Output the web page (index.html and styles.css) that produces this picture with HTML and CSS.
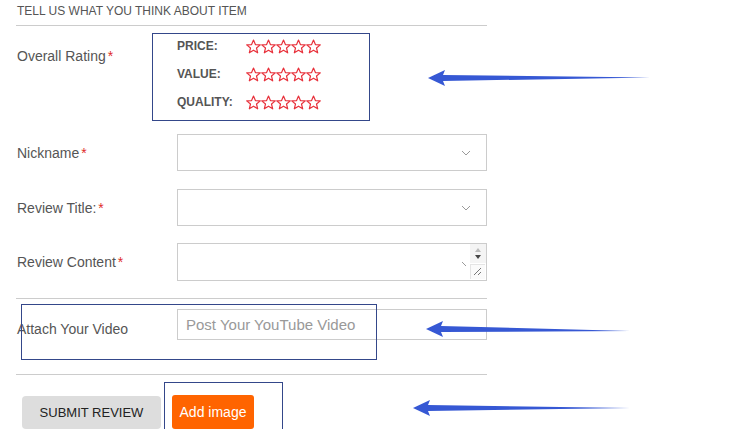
FILE: index.html
```html
<!DOCTYPE html>
<html lang="en">
<head>
    <meta charset="UTF-8">
    <title>Write a review</title>
    <link rel="stylesheet" href="styles.css">
</head>
<body>

<svg width="0" height="0" class="defs">
    <symbol id="star" viewBox="0 0 16 15">
        <path d="M8 1 L9.9 5.6 L14.8 5.9 L11 9 L12.2 13.8 L8 11.2 L3.8 13.8 L5 9 L1.2 5.9 L6.1 5.6 Z" fill="none" stroke="#e8323c" stroke-width="1.2" stroke-linejoin="round"/>
    </symbol>
    <symbol id="stars" viewBox="0 0 75 15">
        <use href="#star" x="0" width="16" height="15"/>
        <use href="#star" x="15" width="16" height="15"/>
        <use href="#star" x="30" width="16" height="15"/>
        <use href="#star" x="45" width="16" height="15"/>
        <use href="#star" x="60" width="16" height="15"/>
    </symbol>
</svg>

<div class="review">
    <h3 class="review-title">Tell us what you think about item</h3>

    <div class="row row-rating">
        <label class="field-label">Overall Rating<em>*</em></label>
        <div class="rating-box">
            <div class="rating-line"><span>PRICE:</span><svg class="stars"><use href="#stars"/></svg></div>
            <div class="rating-line"><span>VALUE:</span><svg class="stars"><use href="#stars"/></svg></div>
            <div class="rating-line"><span>QUALITY:</span><svg class="stars"><use href="#stars"/></svg></div>
        </div>
    </div>

    <div class="row row-nick">
        <label class="field-label">Nickname<em>*</em></label>
        <div class="field select">
            <svg class="chevron" width="10" height="6"><path d="M1 1 L5 5 L9 1" fill="none" stroke="#9a9a9a" stroke-width="1"/></svg>
        </div>
    </div>

    <div class="row row-title">
        <label class="field-label">Review Title:<em>*</em></label>
        <div class="field select">
            <svg class="chevron" width="10" height="6"><path d="M1 1 L5 5 L9 1" fill="none" stroke="#9a9a9a" stroke-width="1"/></svg>
        </div>
    </div>

    <div class="row row-content">
        <label class="field-label">Review Content<em>*</em></label>
        <div class="field textarea">
            <svg class="chevron hidden-chevron" width="8" height="6"><path d="M1 1 L5 5" fill="none" stroke="#9a9a9a" stroke-width="1"/></svg>
            <div class="spinner">
                <svg width="16" height="19"><path d="M5 8 L8 4 L11 8 Z" fill="#bbb"/><path d="M5 11 L8 15 L11 11 Z" fill="#444"/></svg>
            </div>
            <svg class="grip" width="11" height="11"><path d="M10 3 L3 10 M10 7 L7 10" stroke="#777" stroke-width="1"/></svg>
        </div>
    </div>

    <hr class="divider divider-top">

    <div class="row row-video">
        <label class="field-label">Attach Your Video</label>
        <input class="field video-input" type="text" placeholder="Post Your YouTube Video">
        <div class="mark mark-video"></div>
    </div>

    <hr class="divider divider-bottom">

    <div class="actions">
        <button class="btn btn-submit" type="button">Submit Review</button>
        <div class="add-wrap">
            <button class="btn btn-add" type="button">Add image</button>
            <div class="mark mark-add"></div>
        </div>
    </div>
</div>

<!-- annotation arrows -->
<svg class="arrows" width="735" height="448">
    <path d="M428 78 L445 70 L443 75 L650 77.5 L443 81 L445 86 Z" fill="#3658d4"/>
    <path d="M426 329 L443 321 L441 326 L630 331 L441 332 L443 337 Z" fill="#3658d4"/>
    <path d="M413 408 L430 400 L428 405 L630 408 L428 411 L430 416 Z" fill="#3658d4"/>
</svg>

</body>
</html>
```

FILE: styles.css
```css
body {
    margin: 0;
    padding: 0;
    background-color: #fff;
    font-family: 'Liberation Sans', Arial, sans-serif;
    color: #555;
}

.defs {
    position: absolute;
}

.review {
    position: relative;
    width: 471px;
    margin-left: 16px;
}

.review-title {
    margin: 0;
    padding: 4px 0 7px 1px;
    font-size: 12px;
    line-height: 14px;
    font-weight: normal;
    text-transform: uppercase;
    color: #555;
    border-bottom: 1px solid #ccc;
}

.row {
    display: flex;
    align-items: center;
}

.field-label {
    width: 160px;
    padding-left: 1px;
    font-size: 14px;
    line-height: 18px;
    color: #555;
}

.field-label em {
    font-style: normal;
    color: #e02b2b;
    margin-left: 2px;
}

.row-rating {
    align-items: flex-start;
    margin-top: 7px;
}

.row-rating .field-label {
    width: 135px;
    padding-top: 14px;
}

.rating-box {
    box-sizing: border-box;
    width: 218px;
    height: 88px;
    padding: 4px 0 0 24px;
    border: 1px solid #34478a;
    display: flex;
    flex-direction: column;
    gap: 12px;
}

.rating-line {
    display: flex;
    align-items: center;
    height: 16px;
}

.rating-line span {
    width: 68px;
    font-size: 12px;
    font-weight: bold;
    color: #555;
}

.stars {
    width: 76px;
    height: 15px;
}

.field {
    position: relative;
    box-sizing: border-box;
    width: 310px;
    border: 1px solid #ccc;
    background: #fff;
}

.select {
    height: 37px;
}

.chevron {
    position: absolute;
    right: 15px;
    top: 15px;
}

.row-nick {
    margin-top: 13px;
}

.row-title {
    margin-top: 18px;
}

.row-content {
    margin-top: 17px;
}

.textarea {
    height: 38px;
}

.hidden-chevron {
    right: 17px;
    top: 17px;
}

.spinner {
    position: absolute;
    right: 0;
    top: 0;
    width: 16px;
    height: 19px;
    background: #f4f4f4;
}

.spinner svg {
    display: block;
}

.grip {
    position: absolute;
    right: 1px;
    bottom: 1px;
    border-left: 1px solid #e4e4e4;
    border-top: 1px solid #e4e4e4;
    background: #fafafa;
    width: 14px;
    height: 14px;
}

.divider {
    margin: 0;
    height: 0;
    border: 0;
    border-top: 1px solid #ccc;
}

.divider-top {
    margin-top: 17px;
}

.row-video {
    position: relative;
    margin-top: 10px;
    padding-bottom: 34px;
    align-items: flex-start;
}

.row-video .field-label {
    padding-top: 11px;
}

.video-input {
    height: 31px;
    padding: 0 8px;
    margin: 0;
    font-family: 'Liberation Sans', Arial, sans-serif;
    font-size: 15px;
    color: #555;
    outline: none;
}

.video-input::placeholder {
    color: #999;
}

.mark {
    position: absolute;
    border: 1px solid #34478a;
    box-sizing: border-box;
}

.mark-video {
    left: 5px;
    top: -5px;
    width: 356px;
    height: 56px;
}

.actions {
    display: flex;
    align-items: flex-start;
    gap: 11px;
    margin-top: 21px;
    padding-left: 6px;
}

.btn {
    border: none;
    font-family: 'Liberation Sans', Arial, sans-serif;
    cursor: pointer;
}

.btn-submit {
    width: 139px;
    height: 33px;
    border-radius: 4px;
    background-color: #ddd;
    color: #222;
    font-size: 13px;
    text-transform: uppercase;
}

.add-wrap {
    position: relative;
    margin-top: -1px;
}

.btn-add {
    display: block;
    width: 82px;
    height: 34px;
    border-radius: 3px;
    background-color: #ff6400;
    color: #fff;
    font-size: 14px;
}

.mark-add {
    left: -8px;
    top: -13px;
    width: 119px;
    height: 62px;
}

.arrows {
    position: absolute;
    left: 0;
    top: 0;
    pointer-events: none;
}
```
